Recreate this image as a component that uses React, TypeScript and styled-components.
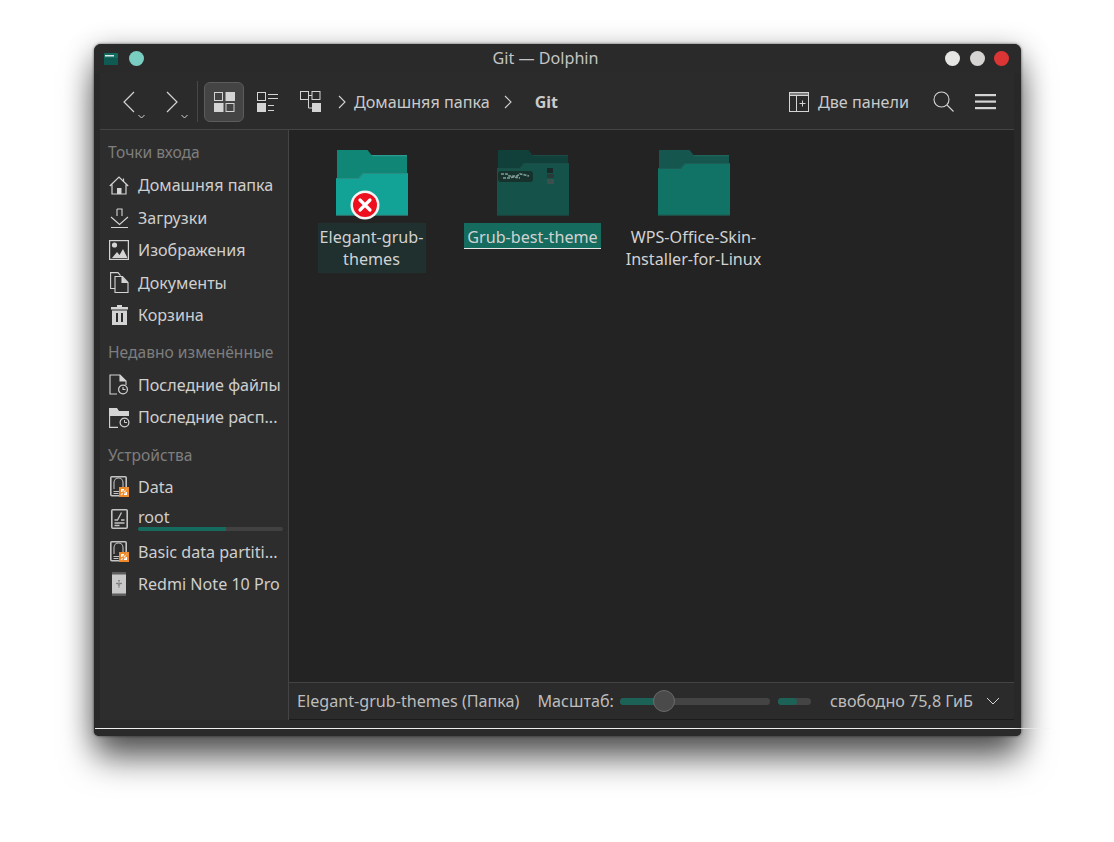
import React from "react";
import styled, { createGlobalStyle } from "styled-components";

const Global = createGlobalStyle`
  html, body { margin: 0; padding: 0; background: #fff; }
  body { font-family: "Noto Sans", "Open Sans", sans-serif; width: 1114px; height: 842px; overflow: hidden; }
`;

const Stage = styled.div`
  position: relative;
  width: 1114px;
  height: 842px;
  padding: 44px 93px 0 94px;
  box-sizing: border-box;
`;

const Win = styled.div`
  position: relative;
  width: 927px;
  height: 692px;
  background: #282828;
  border-radius: 7px 7px 5px 5px;
  display: flex;
  flex-direction: column;
  box-shadow: 0 24px 34px -2px rgba(0,0,0,.6), 0 5px 28px rgba(0,0,0,.3), 0 0 3px rgba(0,0,0,.6);
  color: #d0d0d0;
`;

const TitleBar = styled.div`
  position: relative;
  height: 29px;
  flex: none;
  display: flex;
  align-items: center;
  padding: 0 12px 0 10px;
  gap: 11px;
  background: #2a2a2a;
  border-radius: 7px 7px 0 0;
`;

const Title = styled.div`
  position: absolute;
  left: 0;
  right: 24px;
  top: 3px;
  text-align: center;
  font-size: 16.15px;
  line-height: 22px;
  color: #c4c4c4;
`;

const Dot = styled.span<{ $c: string }>`
  width: 15px;
  height: 15px;
  border-radius: 50%;
  background: ${p => p.$c};
  flex: none;
`;

const WinButtons = styled.div`
  margin-left: auto;
  display: flex;
  gap: 9.5px;
`;

const Toolbar = styled.div`
  flex: none;
  height: 55px;
  margin: 0 7px 0 6px;
  padding: 1px 0 0 21px;
  display: flex;
  align-items: center;
  background: #2b2b2b;
  border-bottom: 1px solid #444;
  box-sizing: content-box;
`;

const NavBtn = styled.div`
  position: relative;
  width: 43px;
  height: 40px;
  display: flex;
  align-items: center;
`;

const Sep = styled.div`
  width: 1px;
  height: 41px;
  background: #484848;
  margin: 0 6px 0 -10px;
`;

const ViewBtn = styled.div<{ $active?: boolean }>`
  width: 40px;
  height: 40px;
  box-sizing: border-box;
  margin-right: 3px;
  border-radius: 6px;
  display: flex;
  align-items: center;
  justify-content: center;
  background: ${p => (p.$active ? "#444" : "transparent")};
  border: 1px solid ${p => (p.$active ? "#5c5c5c" : "transparent")};
`;

const Crumbs = styled.div`
  display: flex;
  align-items: center;
  margin-left: 5px;
  color: #cacaca;
`;

const CrumbText = styled.span<{ $bold?: boolean }>`
  font-weight: ${p => (p.$bold ? 700 : 400)};
  font-size: ${p => (p.$bold ? "16px" : "16.15px")};
  margin-left: ${p => (p.$bold ? "22px" : "7px")};
  margin-right: ${p => (p.$bold ? "0" : "14px")};
`;

const ToolRight = styled.div`
  margin-left: auto;
  display: flex;
  align-items: center;
  padding-right: 18px;
  font-size: 16.15px;
  color: #cacaca;
`;

const PanelLabel = styled.span`
  margin: 0 24px 0 9px;
`;

const MenuGap = styled.span`
  width: 21px;
`;

const Main = styled.div`
  flex: 1;
  min-height: 0;
  display: flex;
  margin: 0 7px 0 6px;
`;

const Sidebar = styled.aside`
  width: 189px;
  flex: none;
  box-sizing: border-box;
  padding: 10px 0 0 4px;
  background: #2d2d2d;
  border-right: 1px solid #444;
`;

const SideHead = styled.div<{ $top?: number; $bottom?: number }>`
  font-size: 15.6px;
  line-height: 24px;
  height: 24px;
  padding-left: 4px;
  color: #7e7e7e;
  margin-top: ${p => p.$top ?? 0}px;
  margin-bottom: ${p => p.$bottom ?? 5}px;
  white-space: nowrap;
`;

const SideRow = styled.div`
  position: relative;
  height: 32.5px;
  display: flex;
  align-items: center;
  gap: 8px;
  padding-left: 4px;
  font-size: 16.1px;
  color: #cfcfcf;
  white-space: nowrap;
`;

const Lifted = styled.span`
  position: relative;
  top: -2px;
`;

const SideIcon = styled.span`
  width: 22px;
  height: 22px;
  flex: none;
  display: flex;
  align-items: center;
  justify-content: center;
`;

const UsageBar = styled.div`
  position: absolute;
  left: 34px;
  right: 5px;
  bottom: 5px;
  height: 4px;
  border-radius: 2px;
  background: #414141;
  overflow: hidden;
`;

const UsageFill = styled.div`
  height: 100%;
  background: #146b5e;
`;

const Content = styled.div`
  flex: 1;
  min-width: 0;
  display: flex;
  flex-direction: column;
`;

const Files = styled.div`
  flex: 1;
  min-height: 0;
  background: #232323;
  display: flex;
  align-items: flex-start;
  padding: 20px 0 0 2px;
`;

const FileItem = styled.div`
  width: 161px;
  display: flex;
  flex-direction: column;
  align-items: center;
`;

const FolderWrap = styled.div`
  position: relative;
  width: 80px;
  height: 70px;
  flex: none;
  display: flex;
  justify-content: center;
`;

const Badge = styled.span`
  position: absolute;
  left: 18px;
  top: 40px;
  width: 30px;
  height: 30px;
`;

const FileName = styled.div<{ $state?: "hover" | "selected" }>`
  margin-top: 3px;
  padding: ${p => (p.$state === "selected" ? "3px 3px 0" : "3px 0")};
  font-size: 16.15px;
  line-height: 22px;
  text-align: center;
  color: #d2d2d2;
  background: ${p => (p.$state === "hover" ? "#1f302e" : p.$state === "selected" ? "#146b5e" : "transparent")};
  border-bottom: ${p => (p.$state === "selected" ? "1px solid #e8e8e8" : "0")};
  width: ${p => (p.$state === "hover" ? "108px" : "auto")};
  white-space: pre;
`;

const Status = styled.div`
  flex: none;
  height: 36px;
  background: #2b2b2b;
  border-top: 1px solid #444;
  border-bottom: 1px solid #1c1c1c;
  display: flex;
  align-items: center;
  padding: 0 14px 0 8px;
  font-size: 16.15px;
  color: #bdbdbd;
  white-space: nowrap;
`;

const ZoomLabel = styled.span`
  margin-left: 18px;
  margin-right: 6px;
`;

const Track = styled.div<{ $w: number; $ml?: number }>`
  position: relative;
  width: ${p => p.$w}px;
  height: 7px;
  margin-left: ${p => p.$ml ?? 0}px;
  border-radius: 4px;
  background: #444;
  flex: none;
`;

const TrackFill = styled.div`
  height: 100%;
  background: #1d6257;
  border-radius: 4px;
`;

const Thumb = styled.div`
  position: absolute;
  left: 33px;
  top: -8px;
  width: 22px;
  height: 22px;
  box-sizing: border-box;
  border-radius: 50%;
  background: #4a4a4a;
  border: 1px solid #6a6a6a;
`;

const Free = styled.span`
  margin-left: auto;
  margin-right: 13px;
`;

const Foot = styled.div`
  flex: none;
  height: 16px;
  background: #2a2a2a;
  border-radius: 0 0 5px 5px;
`;

const WhiteLine = styled.div`
  position: absolute;
  left: 1px;
  top: 684px;
  width: 956px;
  height: 1px;
  background: linear-gradient(90deg, #eee 0, #eee 96%, rgba(238,238,238,.2) 100%);
`;

const C = "#d4d4d4";

const ChevronL = () => (
  <svg width="16" height="24" viewBox="0 0 16 24" fill="none" stroke={C} strokeWidth="1.2"><path d="M13 2 3 12l10 10" /></svg>
);
const ChevronR = () => (
  <svg width="16" height="24" viewBox="0 0 16 24" fill="none" stroke={C} strokeWidth="1.2"><path d="m3 2 10 10L3 22" /></svg>
);
const Mini = styled.svg`
  position: absolute;
  left: 17px;
  top: 32px;
`;
const MiniChev = () => (
  <Mini width="7" height="5" viewBox="0 0 7 5" fill="none" stroke={C} strokeWidth="1"><path d="m.5 1 3 3 3-3" /></Mini>
);
const Crumb = () => (
  <svg width="9" height="14" viewBox="0 0 9 14" fill="none" stroke={C} strokeWidth="1.1"><path d="m1 1 6 6-6 6" /></svg>
);

const IconViewIcons = () => (
  <svg width="21" height="20" viewBox="0 0 21 20">
    <g fill={C}><rect x="11.5" y="0" width="9.5" height="9" /><rect x="0" y="11" width="9.5" height="9" /></g>
    <g fill="none" stroke={C}><rect x=".5" y=".5" width="8" height="8" /><rect x="12" y="11.5" width="8" height="8" /></g>
  </svg>
);
const IconViewCompact = () => (
  <svg width="21" height="20" viewBox="0 0 21 20">
    <g fill="none" stroke={C}><rect x=".5" y=".5" width="8" height="8" /><path d="M11 2.500h10M11 6.500h10M11 13.500h6M11 18.500h6" /></g>
    <rect x="0" y="11" width="9" height="9" fill={C} />
  </svg>
);
const IconViewTree = () => (
  <svg width="21" height="21" viewBox="0 0 21 21">
    <g fill="none" stroke={C}><rect x=".5" y=".5" width="8" height="8" /><rect x="12" y=".5" width="8" height="8" /><path d="M8 4.500h4M8.500 8.500v8.500H12" /></g>
    <rect x="12" y="12" width="9" height="9" fill={C} />
  </svg>
);
const IconPanels = () => (
  <svg width="20" height="20" viewBox="0 0 20 20" fill="none" stroke={C}>
    <rect x=".5" y=".5" width="19" height="19" />
    <path d="M1 2h18M1 3.500h18M7.500 4v15M13.500 8.500v6M10.500 11.500h6" />
  </svg>
);
const IconSearch = () => (
  <svg width="21" height="21" viewBox="0 0 21 21" fill="none" stroke={C} strokeWidth="1.1"><circle cx="8.500" cy="8.500" r="7.500" /><path d="m14 14 6.500 6.500" /></svg>
);
const IconMenu = () => (
  <svg width="21" height="16" viewBox="0 0 21 16" fill={C}><rect width="21" height="2.200" /><rect y="6.500" width="21" height="2.200" /><rect y="13" width="21" height="2.200" /></svg>
);

const Home = () => (
  <svg width="20" height="19" viewBox="0 0 20 19" fill="none" stroke={C} strokeWidth="1.200">
    <path d="M.8 10 10 1l9.200 9M3 8.500V18h14V8.500" />
    <path d="M14.500 2.500v3" />
    <rect x="8" y="12" width="4.500" height="6" fill={C} stroke="none" />
  </svg>
);
const Download = () => (
  <svg width="19" height="20" viewBox="0 0 19 20" fill="none" stroke={C} strokeWidth="1.100">
    <path d="M7 1h5v7M7 1v7M1 9l8.500 7.500L18 9M1 19.500h17" />
  </svg>
);
const Images = () => (
  <svg width="20" height="20" viewBox="0 0 20 20">
    <rect x=".6" y=".6" width="18.800" height="18.800" fill="none" stroke={C} strokeWidth="1.200" />
    <circle cx="5.500" cy="5" r="2.600" fill={C} />
    <path d="M3 18l5-6 2.500 3 3.500-6 4.500 9z" fill={C} />
  </svg>
);
const Docs = () => (
  <svg width="19" height="21" viewBox="0 0 19 21" fill="none" stroke={C} strokeWidth="1.100">
    <path d="M5 16.500H.6V.6h7.400l2.500 3" />
    <path d="M5 4.500h7.500l5.500 6v10H5z" />
    <path d="M12 4.500v6h6" fill={C} />
  </svg>
);
const Trash = () => (
  <svg width="17" height="20" viewBox="0 0 17 20">
    <path d="M6 0h5v2h6v2.500H0V2h6z" fill={C} />
    <path fillRule="evenodd" d="M1 5.500h15V20H1zM5 8v9h2V8zm5 0v9h2V8z" fill={C} />
  </svg>
);
const Clock = ({ x, y }: { x: number; y: number }) => (
  <g transform={`translate(${x} ${y})`}>
    <circle cx="5" cy="5" r="4.400" fill="#2d2d2d" stroke={C} strokeWidth="1.200" />
    <path d="M5 2.500V5h2.500" fill="none" stroke={C} />
  </g>
);
const RecentFile = () => (
  <svg width="20" height="21" viewBox="0 0 20 21" fill="none" stroke={C} strokeWidth="1.100">
    <path d="M8 20H1V1h10l6 6v4" />
    <path d="M11 1v6h6" fill={C} />
    <Clock x={9} y={10.500} />
  </svg>
);
const RecentFolder = () => (
  <svg width="21" height="21" viewBox="0 0 21 21">
    <path d="M0 1h8l2 3h10v5H0z" fill={C} />
    <path d="M.6 8v12.400H9" fill="none" stroke={C} strokeWidth="1.100" />
    <Clock x={10.500} y={10.500} />
  </svg>
);
const DriveBody = () => (
  <g fill="none">
    <rect x=".8" y=".8" width="15.400" height="18.900" rx="1" stroke="#c4c4c4" strokeWidth="1.600" />
    <path d="M4 13V6.500a4.500 4.500 0 0 1 9 0V13" stroke="#bdbdbd" strokeWidth="1.100" />
    <path d="M3.500 15.500h10M3.500 17.500h5" stroke="#c4c4c4" strokeWidth="1.100" />
  </g>
);
const Drive = () => (
  <svg width="19" height="21" viewBox="0 0 19 21">
    <DriveBody />
    <rect x="9" y="11" width="10" height="10" fill="#ef8a2a" />
    <path d="m11 19 6-6" stroke="#fbe3cc" strokeWidth="1.300" strokeDasharray="2.500 1.500" />
    <path d="M11 13h3v1.500h-1.500V16H11zM17 19h-3v-1.500h1.500V16H17z" fill="#fff" />
  </svg>
);
const RootDrive = () => (
  <svg width="17" height="20" viewBox="0 0 17 20" fill="none" stroke="#c4c4c4">
    <rect x=".8" y=".8" width="15.400" height="18.400" rx="1" strokeWidth="1.600" />
    <path d="m10.500 3.500-4 7.500H3.500M10 11h3.500M3.500 14h10M3.500 16.500h5" strokeWidth="1.300" />
  </svg>
);
const Phone = () => (
  <svg width="14" height="24" viewBox="0 0 14 24">
    <rect width="14" height="24" rx="1" fill="#c8c8c8" />
    <rect width="14" height="2.500" fill="#5c5c5c" />
    <rect y="21.500" width="14" height="2.500" fill="#5c5c5c" />
    <path d="M7 8v8M4.500 11 7 13l2.500-2" stroke="#666" fill="none" strokeWidth="1.300" strokeDasharray="1.500 1" />
  </svg>
);

const Folder = ({
  back,
  front,
  shade,
  edge,
  rise,
  thumb,
}: {
  back: string;
  front: string;
  shade: string;
  edge: string;
  rise: number;
  thumb?: boolean;
}) => (
  <svg width="72" height="66" viewBox="0 0 72 66">
    <path d={`M1 0h30.500l4 5H71v${rise + 2}H1z`} fill={back} />
    <path d="M35.500 5H71v1.200H36.500z" fill={edge} />
    <path d={`M0 ${rise + 5}h22.500l4.500-5h45v${65 - rise}H0z`} fill={front} />
    <path d={`M0 ${rise + 5}h22.500l4.500-5h45v1H27.500l-4.500 5H0z`} fill={shade} />
    <rect x="0" y="64.500" width="72" height="1.200" fill={shade} />
    {thumb && (
      <g>
        <rect x="1" y="21" width="35" height="11" rx="3" fill="#17312d" />
        <path d="M4 24h6l2 2h8l3-2 5 1 4 1M6 28h6l4-1 7 1" stroke="#7f9d97" strokeWidth="1.700" fill="none" strokeDasharray="3 1" />
        <rect x="50" y="18" width="6" height="5" fill="#1a2a28" />
        <rect x="50" y="24" width="7" height="4" fill="#2a3a38" />
        <rect x="50" y="29" width="7" height="5" fill="#3a504c" />
      </g>
    )}
  </svg>
);

const ErrorBadge = () => (
  <svg width="30" height="30" viewBox="0 0 30 30">
    <circle cx="15" cy="15" r="14.500" fill="#f4f4f4" />
    <circle cx="15" cy="15" r="12" fill="#ee0f1e" />
    <path d="m10 10 10 10m0-10L10 20" stroke="#fff" strokeWidth="3.200" strokeLinecap="round" />
  </svg>
);

const places = [
  { icon: <Home />, label: "Домашняя папка" },
  { icon: <Download />, label: "Загрузки" },
  { icon: <Images />, label: "Изображения" },
  { icon: <Docs />, label: "Документы" },
  { icon: <Trash />, label: "Корзина" },
];
const recent = [
  { icon: <RecentFile />, label: "Последние файлы" },
  { icon: <RecentFolder />, label: "Последние расп..." },
];

export default function App() {
  return (
    <Stage>
      <Global />
      <Win>
        <TitleBar>
          <svg width="14" height="12" viewBox="0 0 14 12">
            <rect width="14" height="12" rx="1" fill="#136c60" />
            <rect x="1" y="2" width="9" height="1.500" fill="#e6e6e6" />
            <rect y="5" width="14" height="7" rx="1" fill="#0f5a52" />
          </svg>
          <Dot $c="#79cdc1" />
          <Title>Git — Dolphin</Title>
          <WinButtons>
            <Dot $c="#e6e6e4" />
            <Dot $c="#d6d4d2" />
            <Dot $c="#dc3535" />
          </WinButtons>
        </TitleBar>
        <Toolbar>
          <NavBtn><ChevronL /><MiniChev /></NavBtn>
          <NavBtn><ChevronR /><MiniChev /></NavBtn>
          <Sep />
          <ViewBtn $active><IconViewIcons /></ViewBtn>
          <ViewBtn><IconViewCompact /></ViewBtn>
          <ViewBtn><IconViewTree /></ViewBtn>
          <Crumbs>
            <Crumb />
            <CrumbText>Домашняя папка</CrumbText>
            <Crumb />
            <CrumbText $bold>Git</CrumbText>
          </Crumbs>
          <ToolRight>
            <IconPanels />
            <PanelLabel>Две панели</PanelLabel>
            <IconSearch />
            <MenuGap />
            <IconMenu />
          </ToolRight>
        </Toolbar>
        <Main>
          <Sidebar>
            <SideHead>Точки входа</SideHead>
            {places.map(p => (
              <SideRow key={p.label}><SideIcon>{p.icon}</SideIcon>{p.label}</SideRow>
            ))}
            <SideHead $top={8}>Недавно изменённые</SideHead>
            {recent.map(p => (
              <SideRow key={p.label}><SideIcon>{p.icon}</SideIcon>{p.label}</SideRow>
            ))}
            <SideHead $top={9} $bottom={4}>Устройства</SideHead>
            <SideRow><SideIcon><Drive /></SideIcon>Data</SideRow>
            <SideRow>
              <SideIcon><RootDrive /></SideIcon><Lifted>root</Lifted>
              <UsageBar><UsageFill style={{ width: "61%" }} /></UsageBar>
            </SideRow>
            <SideRow><SideIcon><Drive /></SideIcon>Basic data partiti...</SideRow>
            <SideRow><SideIcon><Phone /></SideIcon>Redmi Note 10 Pro</SideRow>
          </Sidebar>
          <Content>
            <Files>
              <FileItem>
                <FolderWrap>
                  <Folder back="#108677" front="#12a396" shade="#2a8d83" edge="#2d9c90" rise={23} />
                  <Badge><ErrorBadge /></Badge>
                </FolderWrap>
                <FileName $state="hover">{"Elegant-grub-\nthemes"}</FileName>
              </FileItem>
              <FileItem>
                <FolderWrap>
                  <Folder back="#113f39" front="#14524a" shade="#1b4d46" edge="#1a4a43" rise={13} thumb />
                </FolderWrap>
                <FileName $state="selected">Grub-best-theme</FileName>
              </FileItem>
              <FileItem>
                <FolderWrap>
                  <Folder back="#15574f" front="#117365" shade="#1e5d55" edge="#1f6359" rise={13} />
                </FolderWrap>
                <FileName>{"WPS-Office-Skin-\nInstaller-for-Linux"}</FileName>
              </FileItem>
            </Files>
            <Status>
              Elegant-grub-themes (Папка)
              <ZoomLabel>Масштаб:</ZoomLabel>
              <Track $w={150}>
                <TrackFill style={{ width: 44 }} />
                <Thumb />
              </Track>
              <Track $w={33} $ml={8}><TrackFill style={{ width: "58%" }} /></Track>
              <Free>свободно 75,8 ГиБ</Free>
              <svg width="14" height="8" viewBox="0 0 14 8" fill="none" stroke={C}><path d="m1 1 6 6 6-6" /></svg>
            </Status>
          </Content>
        </Main>
        <Foot />
        <WhiteLine />
      </Win>
    </Stage>
  );
}
